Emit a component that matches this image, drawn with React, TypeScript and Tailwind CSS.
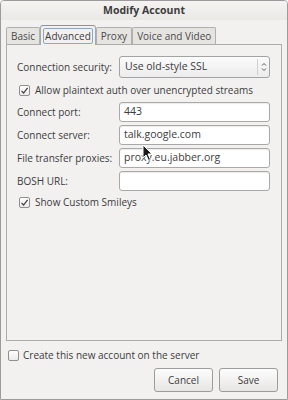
import { ReactNode } from "react";

const font = { fontFamily: '"Open Sans", "DejaVu Sans", sans-serif' };

function Check({ checked }: { checked?: boolean }) {
  return (
    <span className="flex h-[11px] w-[11px] shrink-0 items-center justify-center rounded-[2px] border border-[#8f8f8f] bg-gradient-to-b from-white to-[#ebebeb]">
      {checked && (
        <svg width="9" height="9" viewBox="0 0 9 9">
          <path d="M1.5 4.8 L3.6 7 L7.6 1.8" fill="none" stroke="#3c3c3c" strokeWidth="1.2" />
        </svg>
      )}
    </span>
  );
}

function Field({ label, value }: { label: string; value?: string }) {
  return (
    <div className="flex h-[20px] items-center">
      <span className="w-[102px] shrink-0 whitespace-nowrap">{label}</span>
      <div className="flex h-[20px] w-[151px] items-center rounded-[3px] border border-[#a9a9a9] bg-white px-[4px] text-[10.5px] shadow-[inset_0_1px_1px_rgba(0,0,0,0.08)]">
        {value}
      </div>
    </div>
  );
}

function Tab({ children, active }: { children: ReactNode; active?: boolean }) {
  if (active)
    return (
      <div className="relative z-10 -mb-px flex h-[20px] items-center rounded-t-[3px] border border-b-0 border-[#9fa9b6] border-t-[#7f97b3] bg-[#f2f1f0] px-[2px] pt-[1px]">
        <span className="rounded-[2px] border border-[#8fa7c4] px-[1px] leading-[14px]">{children}</span>
      </div>
    );
  return (
    <div className="flex h-[17px] items-center rounded-t-[2px] border border-b-0 border-[#b2b0ac] bg-[#e6e4e1] px-[4px] text-[#4a4a4a]">
      {children}
    </div>
  );
}

export default function App() {
  return (
    <div
      style={font}
      className="relative flex h-[400px] w-[288px] flex-col overflow-hidden rounded-t-[4px] border border-[#9b9b9b] bg-[#f2f1f0] text-[10px] text-[#3c3c3c]"
    >
      <div className="flex h-[19px] items-center justify-center bg-gradient-to-b from-[#f4f3f1] to-[#ebe9e6] text-[10.5px] font-bold text-[#3c3c3c]">
        Modify Account
      </div>

      <div className="mt-[4px] flex h-[20px] items-end pl-[5px] text-[10px]">
        <Tab>Basic</Tab>
        <Tab active>Advanced</Tab>
        <Tab>Proxy</Tab>
        <Tab>Voice and Video</Tab>
      </div>

      <div className="mx-[5px] flex h-[297px] flex-col border border-[#aeaca8] pl-[10px] pt-[11px]">
        <div className="flex h-[22px] items-center">
          <span className="w-[102px] shrink-0 whitespace-nowrap">Connection security:</span>
          <div className="flex h-[22px] w-[151px] items-center rounded-[3px] border border-[#a3a3a3] bg-gradient-to-b from-[#fbfbfb] to-[#ececec] text-[10.5px]">
            <span className="flex-1 pl-[5px]">Use old-style SSL</span>
            <span className="flex h-[16px] w-[12px] items-center justify-center border-l border-[#cfcfcf]">
              <svg width="6" height="10" viewBox="0 0 6 10">
                <path d="M1 3.5 L3 1.5 L5 3.5 M1 6.5 L3 8.5 L5 6.5" fill="none" stroke="#555" strokeWidth="1" />
              </svg>
            </span>
          </div>
        </div>

        <div className="mt-[2px] flex h-[20px] items-center gap-[5px] pl-[2px]">
          <Check checked />
          <span className="whitespace-nowrap">Allow plaintext auth over unencrypted streams</span>
        </div>

        <div className="mt-[2px] flex flex-col gap-[3px]">
          <Field label="Connect port:" value="443" />
          <Field label="Connect server:" value="talk.google.com" />
          <Field label="File transfer proxies:" value="proxy.eu.jabber.org" />
          <Field label="BOSH URL:" />
        </div>

        <div className="mt-[1px] flex h-[20px] items-center gap-[5px] pl-[2px]">
          <Check checked />
          <span>Show Custom Smileys</span>
        </div>
      </div>

      <div className="mt-[4px] flex h-[20px] items-center gap-[4px] pl-[7px]">
        <Check />
        <span>Create this new account on the server</span>
      </div>

      <div className="mt-[3px] flex justify-end gap-[6px] pr-[9px]">
        <button className="h-[24px] w-[59px] rounded-[3px] border border-[#9c9c9c] bg-gradient-to-b from-[#fdfdfd] to-[#e7e6e4] text-[#3c3c3c]">
          Cancel
        </button>
        <button className="h-[24px] w-[59px] rounded-[3px] border border-[#9c9c9c] bg-gradient-to-b from-[#fdfdfd] to-[#e7e6e4] text-[#3c3c3c]">
          Save
        </button>
      </div>

      <svg className="absolute left-[141px] top-[143px]" width="12" height="18" viewBox="0 0 12 18">
        <path d="M1 1 L1 14 L4 11 L6.5 16.5 L8.5 15.5 L6 10 L10 10 Z" fill="#1a1a1a" stroke="#fff" strokeWidth="1" />
      </svg>
    </div>
  );
}
